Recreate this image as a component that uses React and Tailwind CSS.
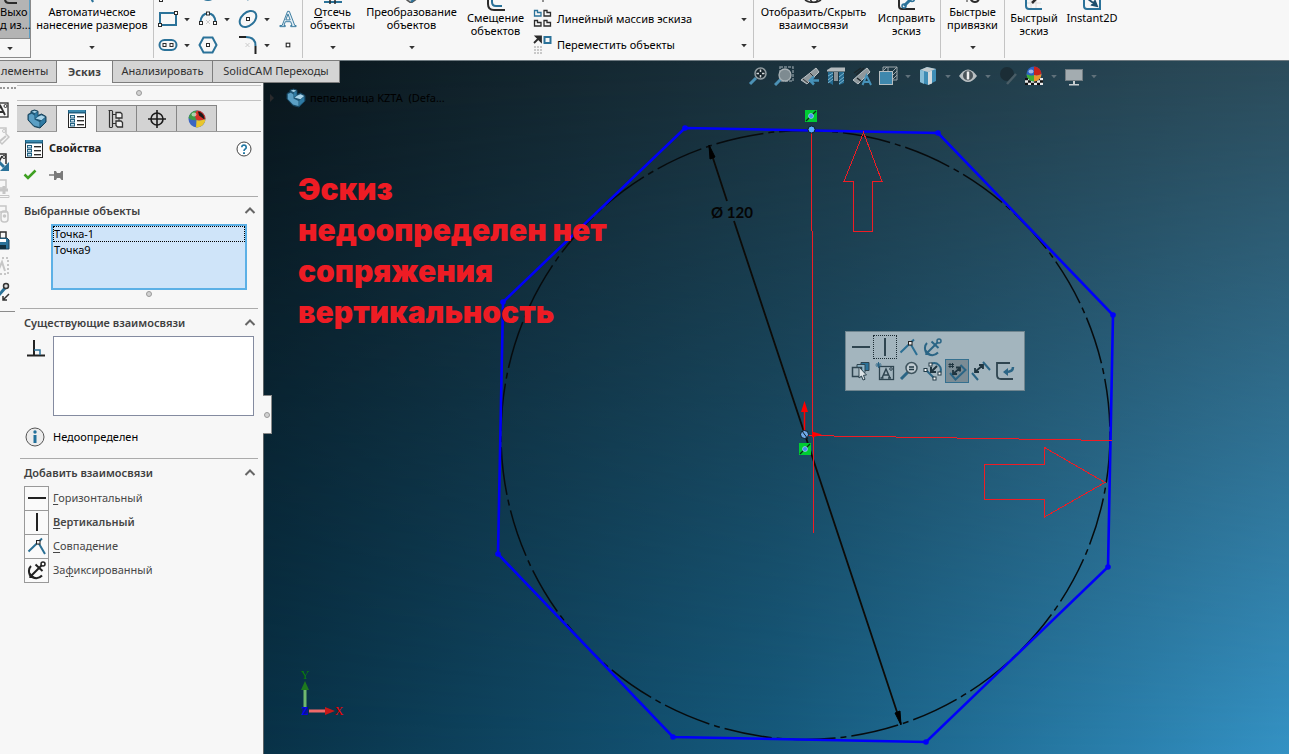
import React, { useState } from "react";

const BLUE = "#2b7299";
const DARK = "#2b2b2b";

const Icon = ({ size = 20, box = 20, children, className = "" }) => (
  <svg
    width={size}
    height={size}
    viewBox={`0 0 ${box} ${box}`}
    fill="none"
    aria-hidden="true"
    className={`shrink-0 ${className}`}
  >
    {children}
  </svg>
);

const Caret = ({ className = "text-[#333]" }) => (
  <svg width="8" height="5" viewBox="0 0 8 5" aria-hidden="true" className={`shrink-0 ${className}`}>
    <path d="M1.2 1h5.6L4 4.2z" fill="currentColor" />
  </svg>
);

/* ---------- shared glyphs ---------- */

const PartIcon = ({ size = 20 }) => (
  <Icon size={size}>
    <path d="M1 5.500 4 4V2.200L7.500 1 11 2.200v4.300l3.500-1.500 4.500 2.500v5.500L13 19 7 17.500 1 11z" fill="#1f5675" stroke="#17435c" strokeWidth="1" strokeLinejoin="round" />
    <path d="M1.800 6 4.800 4.800 7.500 6.500v4L12.500 13v5L7 16.500 1.800 11z" fill="#5b9fc4" />
    <path d="m4.800 2.700 2.700-1 2.900 1-2.700 1.200zM11.500 7.500l3-1.300 3.600 1.700-3.600 3.300L8.500 9.500z" fill="#a8d4ea" />
    <path d="M7.800 4.500 10.600 3.200v4.300L7.800 9zM13.200 12.800l5-4v4.400l-5 4.600z" fill="#2f7aa3" />
  </Icon>
);

const PropertiesIcon = ({ size = 20 }) => (
  <Icon size={size}>
    <rect x="1.5" y="1.5" width="17" height="17" fill="#fff" stroke="#262626" />
    <rect x="1" y="1" width="18" height="3.5" fill="#1f5f80" />
    <path d="M2 2h16" stroke="#55b4dd" />
    {[6.5, 10.5, 14.5].map((y) => (
      <g key={y}>
        <rect x="3.5" y={y} width="4" height="2.5" fill="#cfe6f2" stroke="#1f5f80" />
        <path d={`M10 ${y + 1.2}h7`} stroke="#222" strokeWidth="1.3" />
      </g>
    ))}
  </Icon>
);

const TreeIcon = () => (
  <Icon>
    <path d="M5.500 2v16M5.500 5.500h4M5.500 14.500h4" stroke="#333" strokeWidth="1.2" />
    <path d="M2.500 1.500v17M1.500 1.500h4M2.500 18.500h3" stroke="#333" strokeWidth="1.2" />
    <path d="M9 3.500h4.500l1.500 1.500v4H9z" stroke="#333" strokeWidth="1.3" fill="#f2f2f2" />
    <path d="M9 12h5l1.500 1.500V18H10.500L9 16.500z" stroke="#333" strokeWidth="1.3" fill="#f2f2f2" />
    <path d="M12 9v3" stroke="#333" />
  </Icon>
);

const TargetIcon = () => (
  <Icon>
    <circle cx="10" cy="10" r="6" stroke="#1c1c1c" strokeWidth="1.6" />
    <path d="M10 1v18M1 10h18" stroke="#1c1c1c" strokeWidth="1.6" />
  </Icon>
);

const BallIcon = ({ checker = false }) => (
  <Icon>
    {checker && (
      <>
        <path d="M1 12h18v7H1z" fill="#e8e8e8" />
        <path d="M1 12h3v2.3H1zM7 12h3v2.3H7zM13 12h3v2.3h-3zM4 14.3h3v2.4H4zM10 14.3h3v2.4h-3zM16 14.3h3v2.4h-3zM1 16.7h3V19H1zM7 16.7h3V19H7zM13 16.7h3V19h-3z" fill="#111" />
      </>
    )}
    {checker ? (
      <>
        <circle cx="10" cy="8" r="7.500" fill="#2d62c4" />
        <path d="M10 .5A7.500 7.500 0 0 1 17.500 8c-2.500 1.500-5 1.800-7.500 1z" fill="#c8241c" />
        <path d="M2.500 8c2 1.500 5 2 7.500 1v6.500A7.500 7.500 0 0 1 2.500 8z" fill="#3fae35" />
        <path d="M10 9c2.500.8 5 .5 7.500-1a7.500 7.500 0 0 1-7.500 7.500z" fill="#e9952c" />
      </>
    ) : (
      <>
        <circle cx="10" cy="10" r="8.500" fill="#3c66c2" />
        <path d="M10 1.500C7.500 4.500 7.500 7.500 9.500 11c-3 .5-5.500 0-8-2A8.500 8.500 0 0 1 10 1.500z" fill="#3f9a45" />
        <path d="M10 1.500a8.500 8.500 0 0 1 8.500 8.500c-3 1.500-6 2-9 1C7.500 7.500 7.500 4.500 10 1.500z" fill="#d63226" />
        <path d="M9.500 11c3 1 6 .5 9-1a8.500 8.500 0 0 1-9.500 8.400z" fill="#e9c62c" />
        <path d="M11 2.500c4 .5 6.500 4 6.500 8L12 6.500z" fill="#1a1a1a" />
      </>
    )}
    <ellipse cx="7" cy="5.500" rx="2.500" ry="2" fill="#fff" opacity=".55" />
  </Icon>
);

const HorizontalIcon = ({ color = "#222" }) => (
  <Icon><path d="M1 10h18" stroke={color} strokeWidth="2" /></Icon>
);

const VerticalIcon = ({ color = "#222" }) => (
  <Icon><path d="M10 1v18" stroke={color} strokeWidth="2" /></Icon>
);

const CoincidentIcon = () => (
  <Icon>
    <path d="M1.500 15.500 15 2.500M11 6l7 12" stroke="#2b6f94" strokeWidth="2" />
    <rect x="9.500" y="4.500" width="3.500" height="3.500" fill="#eee" stroke="#222" />
  </Icon>
);

const AnchorIcon = ({ color = "#222" }) => (
  <Icon>
    <circle cx="16" cy="4" r="2" stroke={color} strokeWidth="1.500" />
    <path d="M14.500 5.500 4.500 15.500M8.500 4.500l7 6.500" stroke={color} strokeWidth="2" />
    <path d="M4 6C1.500 8.500 1.500 12 3 15.500M5 17c3.500 1.700 7.500 1.200 10-1.500" stroke={color} strokeWidth="2" />
    <path d="M2.300 12v6h6z" fill={color} />
  </Icon>
);

/* ---------- ribbon ---------- */

const Tool = ({ icon, lines, low, caret, className }) => (
  <button type="button" className={`flex flex-col items-center shrink-0 ${low ? "-mt-[13px]" : "-mt-[19px]"} ${className}`}>
    <span className="h-6 flex items-end">{icon}</span>
    <span className="leading-[13px] text-center whitespace-nowrap">
      {lines.map((l, i) => (
        <span key={i} className="block">{l}</span>
      ))}
    </span>
    {caret && <Caret className="mt-[14px] text-[#333]" />}
  </button>
);

const Separator = () => <span className="w-px h-[58px] bg-[#c4c4c4] shrink-0" />;

const GridTool = ({ label, caret, children }) => (
  <button type="button" aria-label={label} className="flex items-center gap-[5px] h-[26px]">
    {children}
    {caret && <Caret />}
  </button>
);

const Node = ({ x, y }) => <rect x={x} y={y} width="3" height="3" fill="#fff" stroke={DARK} />;

const SketchEntities = () => (
  <div className="grid grid-cols-[40px_40px_41px_27px] auto-rows-[26px] content-start pl-1 -mt-5 w-[148px] shrink-0">
    <GridTool label="Линия"><Icon><path d="M3 17 16 4" stroke={BLUE} strokeWidth="2" /><Node x="1.500" y="15.500" /></Icon></GridTool>
    <GridTool label="Окружность"><Icon><circle cx="10" cy="9" r="8" stroke={BLUE} strokeWidth="2" fill="#7fb4d2" /></Icon></GridTool>
    <GridTool label="Сплайн"><Icon><path d="M1 15 6 8l4 8 5-8 4 8" stroke={BLUE} strokeWidth="2" /></Icon></GridTool>
    <GridTool label="Плоскость"><Icon size={18}><path d="M4 16h10M9 8v8" stroke="#ccc" strokeWidth="2" /></Icon></GridTool>

    <GridTool label="Прямоугольник" caret>
      <Icon><rect x="2" y="4" width="16" height="12" stroke={BLUE} strokeWidth="2" /><Node x=".500" y="14.500" /><Node x="16.500" y="2.500" /></Icon>
    </GridTool>
    <GridTool label="Дуга" caret>
      <Icon><path d="M2.500 13C3 7 6 4.500 10 4.500S17 7 17.500 13" stroke={BLUE} strokeWidth="2" /><path d="m8 11 4 4m0-4-4 4" stroke="#ccc" /><Node x="1.500" y="12.500" /><Node x="15.500" y="12.500" /><Node x="8.500" y="3" /></Icon>
    </GridTool>
    <GridTool label="Эллипс" caret>
      <Icon><ellipse cx="10" cy="10" rx="9.500" ry="6.500" transform="rotate(-42 10 10)" stroke={BLUE} strokeWidth="2" /><Node x="8.500" y="8.500" /></Icon>
    </GridTool>
    <GridTool label="Текст">
      <Icon size={18}><path d="M1 18.500h6v-1.300H5.500L7 13h6l1.500 4.200H13v1.300h6v-1.300h-1.500L11.500 1.500h-2L3.500 17.200H1zM7.600 11 10 4.500l2.400 6.500z" fill="#e6f0f6" stroke={BLUE} /></Icon>
    </GridTool>

    <GridTool label="Паз" caret>
      <Icon><rect x="1.500" y="5" width="17" height="10" rx="5" stroke={BLUE} strokeWidth="2" /><Node x="5" y="8.500" /><Node x="12" y="8.500" /></Icon>
    </GridTool>
    <GridTool label="Многоугольник">
      <Icon><path d="M5.500 2.500h9l4 7.500-4 7.500h-9L1.500 10z" stroke={BLUE} strokeWidth="2" /><Node x="8.500" y="8.500" /></Icon>
    </GridTool>
    <GridTool label="Скругление" caret>
      <Icon><path d="M1 2h7" stroke="#222" strokeWidth="2" /><path d="M8 2c6 0 9.500 3 9.500 9" stroke={BLUE} strokeWidth="2" /><path d="M17.500 11v8" stroke="#222" strokeWidth="2" /><path d="m7.500 8 4 4m0-4-4 4" stroke="#ccc" /></Icon>
    </GridTool>
    <GridTool label="Точка"><Icon size={18}><rect x="8" y="8" width="4" height="4" fill="#fff" stroke="#222" strokeWidth="1.200" /></Icon></GridTool>
  </div>
);

const RowTool = ({ label, children }) => (
  <button type="button" className="flex items-center h-[26px] pl-[3px] pr-[5px] text-left">
    {children}
    <span className="ml-1 flex-1 whitespace-nowrap">{label}</span>
    <Caret />
  </button>
);

const Ribbon = () => (
  <header className="flex h-[60px] overflow-hidden shrink-0 bg-[#f7f7f7] text-black">
    <button type="button" className="w-[31px] shrink-0 border-r border-[#8a8a8a] h-[58px] flex flex-col">
      <span className="w-full h-[38px] shrink-0 bg-[#b4b4b4] flex flex-col items-start border-r border-[#5d9fc4]">
        <Icon size={24} box={24} className="-mt-[19px]"><path d="M5 2v16q0 4 4 4h8" stroke={DARK} strokeWidth="2" /></Icon>
        <span className="leading-[13px] text-left whitespace-nowrap">
          <span className="block">Выхо</span>
          <span className="block">д из...</span>
        </span>
      </span>
      <span className="w-full flex-1 border-y border-[#8a8a8a] flex items-center justify-center pr-2.5">
        <Caret />
      </span>
    </button>
    <Tool
      className="w-[122px]" caret lines={["Автоматическое", "нанесение размеров"]}
      icon={<Icon><path d="m4 4 7 13-3-8" stroke={BLUE} strokeWidth="2" /></Icon>}
    />
    <Separator />
    <SketchEntities />
    <Separator />
    <Tool
      className="w-[59px]" caret lines={[<><u>О</u>тсечь</>, "объекты"]}
      icon={<Icon><path d="M1 17h18" stroke={BLUE} strokeWidth="2" /><path d="M7 4v15M12 4v15" stroke={DARK} strokeWidth="1.500" /></Icon>}
    />
    <Tool
      className="w-[99px]" caret lines={["Преобразование", "объектов"]}
      icon={<Icon className="mb-0.5"><path d="M5 12v5l4 3 7-5" fill="#b9c6cd" stroke="#555" strokeWidth="1.500" /><path d="m9 19 8-7" stroke={BLUE} strokeWidth="2" /></Icon>}
    />
    <Tool
      className="w-[69px]" low lines={["Смещение", "объектов"]}
      icon={<Icon><path d="M2 1v12q0 6 6 6h11" stroke={DARK} strokeWidth="2" /><path d="M6 1v10q0 4 4 4h6" stroke={BLUE} strokeWidth="2" /></Icon>}
    />
    <div className="flex flex-col w-[223px] shrink-0 -mt-5">
      <button type="button" aria-label="Зеркально отразить" className="h-[26px] pl-[3px] flex items-center"><Icon><path d="M10 2v17M3 7l4 3-4 3z" stroke={DARK} /></Icon></button>
      <RowTool label="Линейный массив эскиза">
        <Icon>
          <path d="M1.500 1.500h3v2h3.500v3.500h-6.500z" stroke={BLUE} strokeWidth="1.300" />
          <path d="M11 1.500h3v2h3.500v3.500H11zM1.500 11.500h3v2h3.500V17h-6.500zM11 11.500h3v2h3.500V17H11z" stroke={DARK} strokeWidth="1.300" />
        </Icon>
      </RowTool>
      <RowTool label="Переместить объекты">
        <Icon>
          <path d="m1 8 4-4M3 1.500h5v5z" stroke={DARK} fill={DARK} strokeWidth="1.800" />
          <rect x="11.500" y="2" width="6" height="6" stroke={BLUE} strokeWidth="2" />
          <path d="M1 12h8M1 15h8M1 18h8" stroke="#c9c9c9" strokeWidth="2" strokeDasharray="2 1" />
        </Icon>
      </RowTool>
    </div>
    <Separator />
    <Tool
      className="w-[119px]" caret lines={["Отобразить/Скрыть", "взаимосвязи"]}
      icon={<Icon className="mb-0.5"><path d="M1 17q8 5 16 0" stroke={DARK} strokeWidth="1.500" /><circle cx="10" cy="16" r="3.500" stroke={DARK} strokeWidth="1.500" /></Icon>}
    />
    <Tool
      className="w-[67px]" low lines={["Исправить", "эскиз"]}
      icon={<Icon><path d="M2 6v9q0 3 3 3h13" stroke={DARK} strokeWidth="2" /><path d="m7 15 8-8" stroke={BLUE} strokeWidth="3" /><circle cx="7" cy="15" r="2" stroke={BLUE} strokeWidth="1.500" /><circle cx="15" cy="8" r="2.500" stroke={BLUE} strokeWidth="1.500" /></Icon>}
    />
    <Separator />
    <Tool
      className="w-[63px]" caret lines={["Быстрые", "привязки"]}
      icon={<Icon className="mb-0.5"><path d="M4 8v11" stroke={DARK} /><path d="M7 14q1 5 5 5t4-5" stroke={DARK} strokeWidth="2" /></Icon>}
    />
    <Separator />
    <Tool
      className="w-[58px]" low lines={["Быстрый", "эскиз"]}
      icon={<Icon><path d="M7 7v10M12 7v10M3 12h14" stroke="#ddd" /><path d="M2 6v9q0 3 3 3h13" stroke={BLUE} strokeWidth="2" /><path d="m8 12 6-6" stroke={DARK} strokeWidth="2.500" /></Icon>}
    />
    <Tool
      className="w-[58px]" low lines={["Instant2D"]}
      icon={<Icon><path d="M2 6v9q0 3 3 3h13V6" stroke={BLUE} strokeWidth="2" /><path d="m6 8 8 6M15 15l-5-1 3-4z" stroke="#1f4f6c" fill={BLUE} strokeWidth="1.800" /></Icon>}
    />
  </header>
);

const CommandTabs = () => (
  <nav className="flex w-max h-[23px] border-t border-[#7d7d7d] bg-[#d4d4d4] text-[#303030] relative z-10 shrink-0">
    <button type="button" className="w-[57px] text-left pl-px border-r border-b border-[#7d7d7d]">лементы</button>
    <button type="button" className="w-[55px] bg-[#f7f7f7] font-bold text-[#444]">Эскиз</button>
    <button type="button" className="w-[101px] border-x border-b border-[#7d7d7d] whitespace-nowrap">Анализировать</button>
    <button type="button" className="w-[127px] border-r border-b border-[#7d7d7d] whitespace-nowrap">SolidCAM Переходы</button>
  </nav>
);

/* ---------- annotation strip on the far left ---------- */

const StripIcon = ({ muted, children }) => (
  <button type="button" tabIndex={-1} className={`h-[26px] w-4 overflow-hidden flex items-center justify-end pr-1.5 ${muted ? "text-[#c6c6c6]" : "text-[#2f2f2f]"}`}>
    <Icon>{children}</Icon>
  </button>
);

const Note = () => (
  <>
    <rect x="1" y="3" width="17" height="14" stroke="currentColor" strokeWidth="1.300" />
    <path d="m6 15 4.500-9L15 15M8 12h5" stroke="currentColor" strokeWidth="1.800" />
    <circle cx="15.500" cy="6" r="1.500" stroke="currentColor" />
  </>
);

const LeftStrip = () => (
  <div className="w-4 shrink-0 overflow-hidden">
    <div className="h-[14px] pt-1"><div className="border-t-2 border-dotted border-[#999]" /></div>
    <StripIcon><Note /></StripIcon>
    <StripIcon muted><path d="M8 2h8v6l3 3-7 7-4-4z" stroke="currentColor" strokeWidth="1.500" /><circle cx="14" cy="5" r="1.500" stroke="currentColor" /><path d="m9 16 7-6" stroke="currentColor" strokeWidth="2" /></StripIcon>
    <StripIcon><path d="M8 2h8v10M8 12l4-8" stroke="currentColor" strokeWidth="1.500" /><circle cx="14" cy="5" r="1.500" stroke="currentColor" /><path d="m9 10 5 5" stroke={BLUE} strokeWidth="3" /><path d="M19 10v9h-9z" fill={BLUE} /></StripIcon>
    <StripIcon muted><path d="M8 2h8v8H8" stroke="currentColor" strokeWidth="1.500" /><path d="M14 8v8M10 12h8" stroke="currentColor" strokeWidth="3" /><path d="M9 17.500h10v2H9" stroke="currentColor" /></StripIcon>
    <StripIcon muted><path d="M8 2h8v6H8v8" stroke="currentColor" strokeWidth="1.500" /><rect x="11" y="7" width="7" height="11" rx="3" stroke="currentColor" strokeWidth="1.500" /><circle cx="14.500" cy="12" r="1.800" fill="currentColor" /></StripIcon>
    <StripIcon><path d="M10 8V2h6v6" stroke="currentColor" strokeWidth="1.500" /><path d="M6 8h11l2 2v9H6z" fill={BLUE} stroke="#183f57" /><path d="M9 9h7v3H9z" fill="#fff" /><path d="M10 15h6v4h-6z" fill="#12303f" /></StripIcon>
    <StripIcon muted><rect x="4" y="2" width="14" height="16" stroke="currentColor" strokeDasharray="2 2" strokeWidth="2" /><path d="m8 15 4-9 3 9" stroke="currentColor" strokeWidth="2" /></StripIcon>
    <StripIcon><path d="m8 14 8-9" stroke={BLUE} strokeWidth="3" /><circle cx="16" cy="4" r="2.500" stroke="#333" strokeWidth="1.500" fill="#ddd" /><path d="m19 12-6 6m0-4v4h4" stroke="#333" strokeWidth="1.500" /></StripIcon>
    <div className="border-t border-[#8c8c8c] mt-1.5 w-[15px]" />
  </div>
);

/* ---------- property manager ---------- */

const PANEL_TABS = [
  { id: "tree", label: "Дерево конструирования", icon: <PartIcon /> },
  { id: "props", label: "Менеджер свойств", icon: <PropertiesIcon /> },
  { id: "config", label: "Менеджер конфигураций", icon: <TreeIcon /> },
  { id: "dim", label: "DimXpert", icon: <TargetIcon /> },
  { id: "display", label: "Внешний вид", icon: <BallIcon /> },
];

const Knob = () => <span className="block size-1.5 rounded-full border border-[#9a9a9a] bg-[#d2d2d2]" />;

const Section = ({ title, children, className }) => {
  const [open, setOpen] = useState(true);
  return (
    <section className={`border-t border-[#ababab] ml-[3px] mr-[5px] pl-1 ${className}`}>
      <h3 className="h-[27px]">
        <button
          type="button"
          aria-expanded={open}
          onClick={() => setOpen((o) => !o)}
          className="w-full h-full pt-0.5 flex items-center justify-between pr-0.5 font-semibold text-[#404040]"
        >
          {title}
          <Icon size={12} box={12} className={open ? "" : "rotate-180"}><path d="m1.500 7 4.500-4.500L10.500 7" stroke="#666" strokeWidth="2" /></Icon>
        </button>
      </h3>
      {open && children}
    </section>
  );
};

const RELATIONS = [
  { key: "Г", pre: "", rest: "оризонтальный", icon: <HorizontalIcon /> },
  { key: "В", pre: "", rest: "ертикальный", icon: <VerticalIcon />, strong: true },
  { key: "С", pre: "", rest: "овпадение", icon: <CoincidentIcon /> },
  { key: "ф", pre: "За", rest: "иксированный", icon: <AnchorIcon /> },
];

const PropertyPanel = () => {
  const [selected, setSelected] = useState("Точка-1");
  return (
    <div className="flex-1 min-w-0 ml-px">
      <div className="mr-0.5 mt-0.5 h-4 border-y border-[#c2c2c2] flex items-center justify-center"><Knob /></div>
      <div role="tablist" className="flex mt-1 mr-0.5 h-[27px] border-b border-[#999]">
        {PANEL_TABS.map((t) => (
          <button
            key={t.id}
            type="button"
            role="tab"
            aria-label={t.label}
            aria-selected={t.id === "props"}
            className={`w-10 border-t border-r border-[#858585] flex items-center justify-center ${t.id === "props" ? "bg-[#f7f7f7] h-[27px]" : "bg-[#d3d3d3]"}`}
          >
            {t.icon}
          </button>
        ))}
      </div>

      <div className="flex items-center h-[33px] pl-[7px] pr-[11px]">
        <PropertiesIcon />
        <h2 className="ml-[5px] flex-1 font-bold text-[#222]">Свойства</h2>
        <button type="button" aria-label="Справка">
          <Icon size={16} box={16}><circle cx="8" cy="8" r="7" fill="#fff" stroke="#444" /><path d="M5.800 6.200a2.200 2.200 0 1 1 3.400 1.900q-1.200.700-1.200 1.900" stroke="#2478a3" strokeWidth="1.700" /><path d="M7 11.300h2v1.700H7z" fill="#2478a3" /></Icon>
        </button>
      </div>
      <div className="flex items-start gap-[11px] h-[31px] pt-0.5 pl-1.5">
        <button type="button" aria-label="OK"><Icon size={14} box={14}><path d="m1.500 7.500 3.500 3.500 7.500-7.500" stroke="#3fa022" strokeWidth="2.500" /></Icon></button>
        <button type="button" aria-label="Закрепить"><Icon size={16} box={16}><path d="M1 8h6" stroke="#7a7a7a" strokeWidth="1.500" /><path d="M6 4h2l1 2h3l1.500-2H15v9h-1.500L12 11H9l-1 2H6z" fill="#7a7a7a" /></Icon></button>
      </div>

      <Section title="Выбранные объекты" className="h-28">
        <ul role="listbox" aria-label="Выбранные объекты" className="ml-[27px] mr-[11px] h-[66px] border-2 border-[#5cb0e6] bg-[#cfe4f9] text-black">
          {["Точка-1", "Точка9"].map((p) => (
            <li
              key={p}
              role="option"
              aria-selected={selected === p}
              onClick={() => setSelected(p)}
              className={`h-4 leading-[14px] border ${selected === p ? "border-dotted border-black" : "border-transparent"}`}
            >
              {p}
            </li>
          ))}
        </ul>
        <div className="flex justify-center mt-px pl-4"><Knob /></div>
      </Section>

      <Section title="Существующие взаимосвязи" className="h-[150px]">
        <div className="flex">
          <Icon className="mt-0.5 ml-0.5"><path d="M1 17.500h18" stroke="#222" strokeWidth="2" /><path d="M8 2v15" stroke="#222" strokeWidth="2" /><path d="M8 12h6v5" stroke={BLUE} strokeWidth="1.500" /></Icon>
          <ul role="listbox" aria-label="Существующие взаимосвязи" className="ml-[7px] mr-1 flex-1 h-20 bg-white border border-[#848ba0]" />
        </div>
        <p className="flex items-center mt-[11px] text-black">
          <Icon className="ml-px"><circle cx="10" cy="10" r="9" fill="#ececec" stroke="#555" /><circle cx="10" cy="5" r="1.700" fill="#22709b" /><path d="M10 8v8" stroke="#22709b" strokeWidth="3" /></Icon>
          <span className="ml-2">Недоопределен</span>
        </p>
      </Section>

      <Section title="Добавить взаимосвязи">
        {RELATIONS.map((r) => (
          <button key={r.key} type="button" className="flex items-center h-6 w-full text-[#474747]">
            <span className="size-[25px] shrink-0 border border-[#999] bg-[#fafafa] flex items-center justify-center">{r.icon}</span>
            <span className={`ml-1 ${r.strong ? "font-semibold" : ""}`}>
              {r.pre}<span className="underline underline-offset-2">{r.key}</span>{r.rest}
            </span>
          </button>
        ))}
      </Section>
    </div>
  );
};

/* ---------- graphics area ---------- */

const VERTICES = [[685, 128], [938, 133], [1113, 315], [1108, 567], [926, 742], [673, 737], [498, 554], [503, 302]];

const GreenRelation = ({ x, y }) => (
  <g>
    <rect x={x} y={y} width="12" height="12" fill="#00cc33" />
    <path d={`M${x + 1} ${y + 11}l10-10`} stroke="#0a2a12" strokeWidth="1.200" />
    <circle cx={x + 6} cy={y + 6} r="2.500" fill="#3f8ff0" stroke="#bcd9ff" strokeWidth=".600" />
  </g>
);

const Scene = () => (
  <svg className="absolute inset-0 w-full h-full" viewBox="264 61 1025 693" preserveAspectRatio="xMidYMid slice" fill="none" role="img" aria-label="Эскиз">
    <defs>
      <linearGradient id="top">
        <stop offset="0" stopColor="#0a161c" />
        <stop offset=".5" stopColor="#1b323d" />
        <stop offset="1" stopColor="#2c4c5b" />
      </linearGradient>
      <linearGradient id="bottom">
        <stop offset="0" stopColor="#083248" />
        <stop offset=".5" stopColor="#155a7d" />
        <stop offset="1" stopColor="#3492c4" />
      </linearGradient>
      <linearGradient id="fade" x1="0" y1="0" x2="0" y2="1">
        <stop offset="0" stopColor="#000" />
        <stop offset="1" stopColor="#fff" />
      </linearGradient>
      <mask id="fadeMask"><rect x="264" y="61" width="1025" height="693" fill="url(#fade)" /></mask>
    </defs>
    <rect x="264" y="61" width="1025" height="693" fill="url(#top)" />
    <rect x="264" y="61" width="1025" height="693" fill="url(#bottom)" mask="url(#fadeMask)" />

    {/* inscribed construction circle */}
    <circle cx="805.500" cy="435" r="304.500" stroke="#070b0d" strokeWidth="1.500" strokeDasharray="48 5 6 5" />

    {/* diameter dimension */}
    <path d="M709 146 727 201M734 221 901 724" stroke="#0d0b08" strokeWidth="1.800" />
    <path d="m709 145 6 12-5 2zM901 725l-6-12 5-2z" fill="#000" stroke="#000" />
    <text x="711" y="218" fontSize="15" fontWeight="700" fontFamily="Lato, sans-serif" fill="#050505">Ø 120</text>

    <polygon points={VERTICES.map((v) => v.join(",")).join(" ")} stroke="#0000fa" strokeWidth="2.600" />
    {VERTICES.map(([x, y]) => <circle key={`${x}-${y}`} cx={x} cy={y} r="2.800" fill="#0000fa" />)}

    {/* hand-drawn markup */}
    <g stroke="#f01c24" strokeWidth="1" shapeRendering="crispEdges">
      <path d="M811.500 130v101M812.500 231v204M813.500 435v98" />
      <path d="M804 435.500h30M834 436.500h62M896 437.500h61M957 438.500h62M1019 439.500h62M1081 440.500h31" />
      <path d="M863.500 132.500 844 181.500h9.500v50h19v-50H882z" />
      <path d="M984.500 464.500h60v-17l60.500 35-60.500 34.500v-17.500h-60z" />
    </g>

    {/* origin */}
    <path d="M804.500 435v-26" stroke="#f00" strokeWidth="1.500" />
    <path d="m804.500 401 3.500 11h-7zM822 434.500l-10-3v6z" fill="#f00" />
    <GreenRelation x={805} y={110} />
    <GreenRelation x={799} y={443} />
    <circle cx="811.500" cy="129.500" r="3.500" fill="#5aaeff" stroke="#0b1a26" />
    <circle cx="804.500" cy="434.500" r="4" fill="#6fa8e8" stroke="#0b1a26" />
    <path d="m802 431 6 8" stroke="#0b1a26" />

    {/* axis triad */}
    <path d="M305 708v-20" stroke="#6fb86f" strokeWidth="3" />
    <path d="m305 681 4 9h-8z" fill="#1e7a1e" />
    <path d="M309 711h18" stroke="#f06a6a" strokeWidth="3" />
    <path d="m335 711-10 4v-8z" fill="#c81818" />
    <rect x="302" y="707" width="6" height="8" fill="#0c1490" />
    <g fontFamily="Liberation Serif, serif" fontSize="12" textAnchor="middle">
      <text x="305" y="679" fill="#0a7d0a">Y</text>
      <text x="339" y="715" fill="#f00000">X</text>
      <text x="305" y="715" fill="#0000ff">Z</text>
    </g>
  </svg>
);

const Dim = () => <Caret className="text-[#60717a]" />;

const ViewToolbar = () => (
  <div role="toolbar" aria-label="Вид" className="absolute left-[484px] top-[5px] flex items-center gap-1.5">
    <button type="button" aria-label="Во весь экран"><Icon><path d="m2 18 6-6" stroke="#4c91b5" strokeWidth="3" /><circle cx="12.500" cy="7.500" r="5.500" fill="#17252c" stroke="#8f9a9f" strokeWidth="1.500" /><path d="M12.500 3.500v8M8.500 7.500h8" stroke="#d5dadc" strokeWidth="1.500" strokeDasharray="2.500 3" /></Icon></button>
    <button type="button" aria-label="Увеличить элемент вида"><Icon><rect x="6" y="1" width="13" height="14" stroke="#7b8a92" strokeDasharray="3 1" strokeWidth="1.500" /><path d="m1 19 6-6" stroke="#4c91b5" strokeWidth="3" /><circle cx="11" cy="9" r="6" fill="#7e8b91" stroke="#a7b0b4" strokeWidth="1.300" /></Icon></button>
    <button type="button" aria-label="Предыдущий вид"><Icon><path d="m1 14 9-7 6-5 3 4-5 5-7 7z" fill="#8f989c" stroke="#bcc3c6" /><path d="m3 13 5 4M10 7l4 4" stroke="#333" /><path d="M10 14.500h9M14 10.500l-4 4 4 4" stroke="#4691b8" strokeWidth="2.500" /></Icon></button>
    <button type="button" aria-label="Разрез"><Icon><path d="M1 4 5 1.500h14v4H1z" fill="#b3babd" /><path d="M2 6h5v13l-5-3zM13 6h5v11l-5 2z" fill="#256b90" /><path d="m2 10 5-3M2 14l5-4M2 17l5-4M13 11l5-4M13 15l5-4M13 18l5-4" stroke="#7db5d0" /><path d="M8 6h4v9H8z" fill="#8a9297" /></Icon></button>
    <button type="button" aria-label="Динамические примечания"><Icon><path d="m1 14 8-7 6-5 3 4-5 5-7 7z" fill="#8e979b" stroke="#bcc3c6" /><path d="m2 7 7-5M4 9l8-7M5 12l4 3" stroke="#1c262b" strokeWidth="1.500" /><path d="m10.500 19 4-9.500 4.500 9.500M12 16h5" stroke="#4691b8" strokeWidth="2" /></Icon></button>
    <button type="button" aria-label="Ориентация видов"><Icon><path d="M5 5V1h14v13h-4M5 5l4-4M15 5l4-4M10 1v4M15 9l4-4M19 9l-4 4" stroke="#9ba5aa" /><rect x="1.500" y="5.500" width="13" height="13" fill="#3f88ad" stroke="#b7bfc2" /></Icon></button>
    <Dim />
    <button type="button" aria-label="Стиль отображения"><Icon><path d="m2 4 7-3 9 2v12l-8 4-8-3z" fill="#3f8db5" /><path d="m2 4 7-3 9 2-8 3z" fill="#c3cbce" /><path d="m10 6 4-1.500v13L10 19z" fill="#d5dadc" /><path d="M2 4l4 1v13l-4-2z" fill="#87bdd6" /></Icon></button>
    <Dim />
    <button type="button" aria-label="Скрыть/отобразить"><Icon><path d="M1 10q9-13 18 0-9 12-18 0z" fill="#b9bfc2" /><circle cx="10" cy="9.500" r="5" fill="#4a545a" /><path d="M10 5.500v8" stroke="#eee" strokeWidth="2.500" /></Icon></button>
    <Dim />
    <button type="button" aria-label="Внешние виды" disabled><Icon><circle cx="9" cy="8" r="7" fill="#1b2d36" /><path d="m9 18 9-10" stroke="#4a5d66" strokeWidth="2.500" /></Icon></button>
    <button type="button" aria-label="Применить сцену"><BallIcon checker /></button>
    <Dim />
    <button type="button" aria-label="Параметры вида"><Icon><rect x="1.500" y="3.500" width="17" height="11" fill="#a3acb0" stroke="#737d82" /><path d="M9 15h2v3H9zM5 18h10v1.500H5z" fill="#c9ced0" /></Icon></button>
    <Dim />
  </div>
);

const CtxButton = ({ label, children, className = "" }) => (
  <button type="button" aria-label={label} className={`size-6 flex items-center justify-center ${className}`}>{children}</button>
);

const ContextToolbar = () => (
  <div role="toolbar" aria-label="Контекстная панель" className="absolute left-[581px] top-[270px] w-[180px] h-[60px] border border-[#6f858f] bg-[#a3b5be] pl-[3px] pt-[3px]">
    <div className="flex">
      <CtxButton label="Горизонтальный"><HorizontalIcon color="#2f4550" /></CtxButton>
      <CtxButton label="Вертикальный" className="border border-dotted border-[#1b2b33]"><VerticalIcon color="#2f4550" /></CtxButton>
      <CtxButton label="Совпадение"><CoincidentIcon /></CtxButton>
      <CtxButton label="Зафиксированный"><AnchorIcon color="#2b6585" /></CtxButton>
    </div>
    <div className="flex">
      <CtxButton label="Выбрать другой"><Icon><path d="M10 1.500h8v8h-8z" fill="#2b7299" stroke="#2f4550" /><path d="M6 3.500h8v8H6z" fill="#8fb4c6" stroke="#2f4550" /><path d="M1.500 6.500h9v9h-9z" stroke="#2f4550" fill="#a3b5be" strokeWidth="1.500" /><path d="m8 6 7.500 8-3 .3 1.500 4-2 .7-1.500-4L8 17z" fill="#dde4e7" stroke="#2f4550" /></Icon></CtxButton>
      <CtxButton label="Заметка"><Icon><rect x="4.500" y="5.500" width="14" height="13" stroke="#2f4550" strokeWidth="1.300" /><path d="m7 17 4-9 4 9M8 14h5M5.500 17h3M13 17h3" stroke="#2f4550" strokeWidth="1.500" /><circle cx="16" cy="8" r="1.300" stroke="#2f4550" /><path d="M3.500 1v6M.500 4h6M1.500 2l4 4M5.500 2l-4 4" stroke="#2b6585" /></Icon></CtxButton>
      <CtxButton label="Увеличить"><Icon><path d="m2 18 7-7" stroke="#2b6585" strokeWidth="3" /><circle cx="12.500" cy="7" r="5.500" fill="#c1ccd2" stroke="#3f545e" strokeWidth="1.500" /><path d="M10 6h5M10 8.500h5" stroke="#223a46" strokeWidth="1.500" /></Icon></CtxButton>
      <CtxButton label="Отобразить взаимосвязи"><Icon><path d="M8 3c6-3 12 3 9 9M3 9l8 8" stroke="#2b6585" strokeWidth="2" /><path d="m14 5-6 6M8 6v5h5" stroke="#1f3540" strokeWidth="2" /><rect x="1" y="7.500" width="3" height="3" fill="#fff" stroke="#223a46" /><rect x="6" y="2" width="3" height="3" fill="#fff" stroke="#223a46" /><rect x="10" y="16" width="3" height="3" fill="#fff" stroke="#223a46" /><rect x="15" y="11" width="3" height="3" fill="#fff" stroke="#223a46" /></Icon></CtxButton>
      <CtxButton label="Автоматический размер" className="border border-[#35708f] bg-[#7b8c95]"><Icon><path d="M3 2v5M5.500 2v5M1.500 3.500h5.500M1.500 5.500h5.500" stroke="#1f3540" /><path d="m3 12 5.500 6.500L18.500 9 13.500 4" stroke="#2b6585" strokeWidth="2" /><path d="m6 13 7-6M6 9v4h4M9 6.500h4v4" stroke="#1f3540" strokeWidth="1.800" /></Icon></CtxButton>
      <CtxButton label="Размер"><Icon><path d="m1 12 6 7M12 1l7 8" stroke="#2b6585" strokeWidth="2" /><path d="m4 11 8-7M4 7v4h4M8 4h4v4" stroke="#1f3540" strokeWidth="1.800" /></Icon></CtxButton>
      <CtxButton label="Выход из эскиза"><Icon><path d="M15 2H2v12q0 4 4 4h12" stroke="#2f4550" strokeWidth="1.800" /><path d="M18 6q0 5-7 5" stroke="#2b6585" strokeWidth="2.500" /><path d="m8 11 5-4v8z" fill="#2b6585" /></Icon></CtxButton>
    </div>
  </div>
);

const GraphicsArea = () => (
  <main className="relative flex-1 min-w-0 overflow-hidden border-t border-[#6e7a80] bg-[#12384a]">
    <Scene />
    <div className="relative flex items-center h-5 mt-[27px] ml-[5px] text-black">
      <svg width="6" height="8" viewBox="0 0 6 8" aria-hidden="true"><path d="m1 0 4 4-4 4z" fill="#2a2a2c" /></svg>
      <span className="ml-[11px]"><PartIcon /></span>
      <span className="ml-1 whitespace-pre">{"пепельница KZTA  (Defa..."}</span>
    </div>
    <p className="absolute left-[34px] top-[108px] w-[330px] font-['Inter',sans-serif] font-black text-[30px] leading-[41px] text-[#ee1c24]">
      Эскиз недоопределен нет сопряжения вертикальность
    </p>
    <ViewToolbar />
    <ContextToolbar />
  </main>
);

const App = () => (
  <div className="flex flex-col h-screen overflow-hidden bg-[#f7f7f7] font-['Noto_Sans','Open_Sans',sans-serif] text-[11px]">
    <Ribbon />
    <div className="flex flex-1 min-h-0">
      <aside className="relative z-10 w-[264px] shrink-0 flex flex-col">
        <CommandTabs />
        <div className="flex flex-1 min-h-0 border-r border-[#5d6467]">
          <LeftStrip />
          <PropertyPanel />
        </div>
        <button type="button" aria-label="Свернуть панель" className="absolute left-[263px] top-[335px] w-[9px] h-[39px] bg-[#f7f7f7] border border-l-0 border-[#8a8a8a] flex items-center justify-center">
          <Knob />
        </button>
      </aside>
      <GraphicsArea />
    </div>
  </div>
);

export default App;
